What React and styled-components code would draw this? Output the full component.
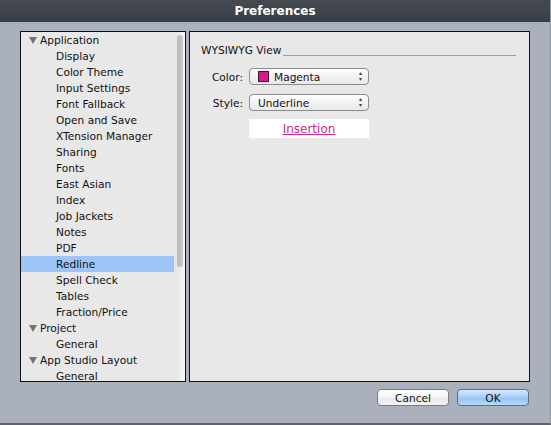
import React from 'react'
import styled, { createGlobalStyle } from 'styled-components'

const GlobalStyle = createGlobalStyle`
  body {
    margin: 0;
    background: #aab1bc;
    font-family: "DejaVu Sans", "Liberation Sans", sans-serif;
  }
`

const treeItems = [
  { label: 'Application', level: 0 },
  { label: 'Display', level: 1 },
  { label: 'Color Theme', level: 1 },
  { label: 'Input Settings', level: 1 },
  { label: 'Font Fallback', level: 1 },
  { label: 'Open and Save', level: 1 },
  { label: 'XTension Manager', level: 1 },
  { label: 'Sharing', level: 1 },
  { label: 'Fonts', level: 1 },
  { label: 'East Asian', level: 1 },
  { label: 'Index', level: 1 },
  { label: 'Job Jackets', level: 1 },
  { label: 'Notes', level: 1 },
  { label: 'PDF', level: 1 },
  { label: 'Redline', level: 1, selected: true },
  { label: 'Spell Check', level: 1 },
  { label: 'Tables', level: 1 },
  { label: 'Fraction/Price', level: 1 },
  { label: 'Project', level: 0 },
  { label: 'General', level: 1 },
  { label: 'App Studio Layout', level: 0 },
  { label: 'General', level: 1 },
]

const App = () => {
  return (
    <>
      <GlobalStyle />
      <Window>
        <TitleBar>Preferences</TitleBar>
        <Body>
          <TreePanel>
            <TreeList>
              {treeItems.map((item, i) => (
                <TreeRow key={i} $selected={item.selected} $level={item.level}>
                  {item.level === 0 && <Disclosure />}
                  {item.label}
                </TreeRow>
              ))}
            </TreeList>
            <ScrollTrack>
              <ScrollThumb />
            </ScrollTrack>
          </TreePanel>
          <ContentPanel>
            <GroupHeader>
              <span>WYSIWYG View</span>
              <HeaderRule />
            </GroupHeader>
            <FieldRow>
              <FieldLabel>Color:</FieldLabel>
              <Popup>
                <Swatch />
                Magenta
                <Arrows>
                  <span>▴</span>
                  <span>▾</span>
                </Arrows>
              </Popup>
            </FieldRow>
            <FieldRow>
              <FieldLabel>Style:</FieldLabel>
              <Popup>
                Underline
                <Arrows>
                  <span>▴</span>
                  <span>▾</span>
                </Arrows>
              </Popup>
            </FieldRow>
            <Preview>Insertion</Preview>
          </ContentPanel>
        </Body>
        <Footer>
          <Button>Cancel</Button>
          <Button $primary>OK</Button>
        </Footer>
      </Window>
    </>
  )
}

const Window = styled.div`
  width: 551px;
  height: 425px;
  box-sizing: border-box;
  background: #aab1bc;
  border-bottom: 2px solid #5e636b;
  border-right: 1px solid #8e959f;
  display: flex;
  flex-direction: column;
`
const TitleBar = styled.div`
  height: 22px;
  background: linear-gradient(#454952, #393d45);
  color: #fff;
  font-family: "DejaVu Sans", sans-serif;
  font-weight: bold;
  font-size: 12px;
  display: flex;
  align-items: center;
  justify-content: center;
  padding-bottom: 1px;
  box-sizing: border-box;
`
const Body = styled.div`
  display: flex;
  gap: 3px;
  padding: 9px 0 0 20px;
  height: 351px;
`
const TreePanel = styled.div`
  width: 166px;
  height: 351px;
  box-sizing: border-box;
  border: 1px solid #111;
  background: #e8e8e8;
  display: flex;
  overflow: hidden;
`
const TreeList = styled.div`
  flex: 1;
  display: flex;
  flex-direction: column;
`
const TreeRow = styled.div`
  height: 16px;
  flex: none;
  display: flex;
  align-items: center;
  padding-left: ${p => (p.$level === 0 ? 8 : 35)}px;
  margin-right: 1px;
  font-size: 10.6px;
  color: #111;
  background: ${p => (p.$selected ? '#9dc5f9' : 'transparent')};
  white-space: nowrap;
`
const Disclosure = styled.span`
  width: 0;
  height: 0;
  border-left: 4px solid transparent;
  border-right: 4px solid transparent;
  border-top: 7px solid #737373;
  margin-right: 3px;
`
const ScrollTrack = styled.div`
  width: 10px;
  flex: none;
  background: linear-gradient(to right, #e4e4e4, #f8f8f8);
  padding: 3px 2px 0 2px;
  box-sizing: border-box;
`
const ScrollThumb = styled.div`
  width: 6px;
  height: 232px;
  border-radius: 3px;
  background: linear-gradient(to right, #b8b8b8, #c8c8c8);
`
const ContentPanel = styled.div`
  width: 341px;
  height: 351px;
  box-sizing: border-box;
  border: 1px solid #111;
  background: #e8e8e8;
  padding: 10px 13px 0 11px;
  display: flex;
  flex-direction: column;
`
const GroupHeader = styled.div`
  display: flex;
  align-items: flex-end;
  gap: 2px;
  font-size: 10.6px;
  color: #111;
  height: 14px;
`
const HeaderRule = styled.div`
  flex: 1;
  height: 1px;
  background: #a0a0a0;
`
const FieldRow = styled.div`
  display: flex;
  align-items: center;
  margin-top: 12px;
  height: 17px;
  & + & {
    margin-top: 9px;
  }
`
const FieldLabel = styled.div`
  width: 48px;
  box-sizing: border-box;
  text-align: right;
  font-size: 10.6px;
  color: #111;
  padding-right: 6px;
`
const Popup = styled.div`
  position: relative;
  width: 120px;
  height: 17px;
  box-sizing: border-box;
  border: 1px solid #8c8c8c;
  border-radius: 4px;
  background: linear-gradient(#ffffff, #f2f2f2 50%, #e9e9e9);
  display: flex;
  align-items: center;
  padding-left: 8px;
  font-size: 10.6px;
  color: #111;
`
const Swatch = styled.span`
  width: 11px;
  height: 11px;
  box-sizing: border-box;
  background: #e0168c;
  border: 1px solid #3a1b2c;
  margin-right: 5px;
`
const Arrows = styled.span`
  position: absolute;
  right: 6px;
  top: 1px;
  display: flex;
  flex-direction: column;
  font-size: 6px;
  line-height: 6px;
  color: #444;
`
const Preview = styled.div`
  margin: 8px 0 0 48px;
  width: 120px;
  height: 19px;
  background: #fff;
  color: #d0268c;
  text-decoration: underline;
  font-size: 12px;
  display: flex;
  align-items: center;
  justify-content: center;
`
const Footer = styled.div`
  display: flex;
  justify-content: flex-end;
  gap: 8px;
  padding: 7px 21px 0 0;
`
const Button = styled.div`
  width: 72px;
  height: 17px;
  box-sizing: border-box;
  border: 1px solid ${p => (p.$primary ? '#5a6c8a' : '#7c7c7c')};
  border-radius: 4px;
  background: ${p =>
    p.$primary
      ? 'linear-gradient(#d4e7fb, #a8cdf5 50%, #8fc1f3 51%, #b5dafb)'
      : 'linear-gradient(#ffffff, #f3f3f3 50%, #e8e8e8 51%, #f4f4f4)'};
  font-size: 10.6px;
  color: #111;
  display: flex;
  align-items: center;
  justify-content: center;
`

export default App
